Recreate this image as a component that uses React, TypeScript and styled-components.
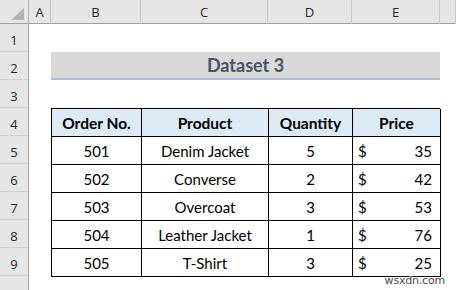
import { FC, Fragment } from "react";
import styled, { createGlobalStyle } from "styled-components";

// css
const GlobalStyle = createGlobalStyle`
  html, body {
    margin: 0;
    padding: 0;
    background: #ffffff;
    overflow: hidden;
  }
  body {
    font-family: Lato, "Open Sans", sans-serif;
  }
`;

const Sheet = styled.div`
  position: relative;
  display: grid;
  grid-template-columns: 29px 22px 90px 127px 84px 88px 1fr;
  grid-template-rows: 24px;
  grid-auto-rows: 28px;
  width: 456px;
  height: 290px;
  overflow: hidden;
  background: #ffffff;
`;

const Corner = styled.div`
  position: relative;
  background: #e6e6e6;
  border-right: 1px solid #b8b8b8;
  border-bottom: 1px solid #a0a0a0;
  box-sizing: border-box;
`;

const CornerTriangle = styled.div`
  position: absolute;
  right: 4px;
  bottom: 3px;
  width: 0;
  height: 0;
  border-left: 13px solid transparent;
  border-bottom: 12px solid #b4b4b4;
`;

const ColHead = styled.div`
  display: flex;
  align-items: center;
  justify-content: center;
  background: #e6e6e6;
  border-right: 1px solid #c8c8c8;
  border-bottom: 1px solid #a0a0a0;
  box-sizing: border-box;
  color: #262626;
  font-family: "Open Sans", Lato, sans-serif;
  font-size: 13px;
`;

const RowHead = styled.div<{ $row: number }>`
  grid-column: 1;
  grid-row: ${(p) => p.$row + 1};
  display: flex;
  align-items: flex-end;
  justify-content: center;
  padding-bottom: 2px;
  background: #e6e6e6;
  border-right: 1px solid #a0a0a0;
  border-bottom: 1px solid #cfcfcf;
  box-sizing: border-box;
  color: #262626;
  font-family: "Open Sans", Lato, sans-serif;
  font-size: 13px;
  line-height: 18px;
`;

const TitleBand = styled.div`
  grid-column: 3 / 7;
  grid-row: 3;
  display: flex;
  align-items: center;
  justify-content: center;
  background: #d9d9d9;
  border-bottom: 2px solid #a9bcdb;
  box-sizing: border-box;
  color: #44546a;
  font-size: 18px;
  font-weight: 700;
`;

const DataTable = styled.div`
  grid-column: 3 / 7;
  grid-row: 5 / 11;
  display: grid;
  grid-template-columns: 90px 127px 84px 88px;
  grid-auto-rows: 28px;
  border-top: 1px solid #000;
  border-left: 1px solid #000;
  align-self: start;
  height: 169px;
  box-sizing: border-box;
`;

const Cell = styled.div<{ $head?: boolean }>`
  display: flex;
  align-items: center;
  justify-content: center;
  border-right: 1px solid #000;
  border-bottom: 1px solid #000;
  box-sizing: border-box;
  background: ${(p) => (p.$head ? "#ddebf7" : "#ffffff")};
  color: #000;
  font-size: ${(p) => (p.$head ? "15.5px" : "15px")};
  font-weight: ${(p) => (p.$head ? 700 : 400)};
`;

const PriceCell = styled(Cell)`
  justify-content: space-between;
  padding: 0 8px 0 5px;
`;

const Watermark = styled.div`
  position: absolute;
  right: 11px;
  bottom: 3px;
  color: #4a4a4a;
  font-family: "DejaVu Sans", sans-serif;
  font-size: 11px;
  letter-spacing: -0.2px;
  text-shadow: 0 0 2px #fff, 0 0 2px #fff;
`;

const columns = ["A", "B", "C", "D", "E", ""];

const rows = [
  { order: 501, product: "Denim Jacket", qty: 5, price: 35 },
  { order: 502, product: "Converse", qty: 2, price: 42 },
  { order: 503, product: "Overcoat", qty: 3, price: 53 },
  { order: 504, product: "Leather Jacket", qty: 1, price: 76 },
  { order: 505, product: "T-Shirt", qty: 3, price: 25 },
];

const App: FC = () => {
  return (
    <>
      <GlobalStyle />
      <Sheet>
        <Corner>
          <CornerTriangle />
        </Corner>
        {columns.map((c, i) => (
          <ColHead key={`col-${i}`}>{c}</ColHead>
        ))}
        {/* row 10 only peeks in at the bottom, its label is out of view */}
        {Array.from({ length: 10 }, (_, i) => (
          <RowHead key={`row-${i}`} $row={i + 1}>
            {i < 9 ? i + 1 : ""}
          </RowHead>
        ))}
        <TitleBand>Dataset 3</TitleBand>
        <DataTable>
          <Cell $head>Order No.</Cell>
          <Cell $head>Product</Cell>
          <Cell $head>Quantity</Cell>
          <Cell $head>Price</Cell>
          {rows.map((r) => (
            <Fragment key={`r-${r.order}`}>
              <Cell>{r.order}</Cell>
              <Cell>{r.product}</Cell>
              <Cell>{r.qty}</Cell>
              <PriceCell>
                <span>$</span>
                <span>{r.price}</span>
              </PriceCell>
            </Fragment>
          ))}
        </DataTable>
        <Watermark>wsxdn.com</Watermark>
      </Sheet>
    </>
  );
};

export default App;
